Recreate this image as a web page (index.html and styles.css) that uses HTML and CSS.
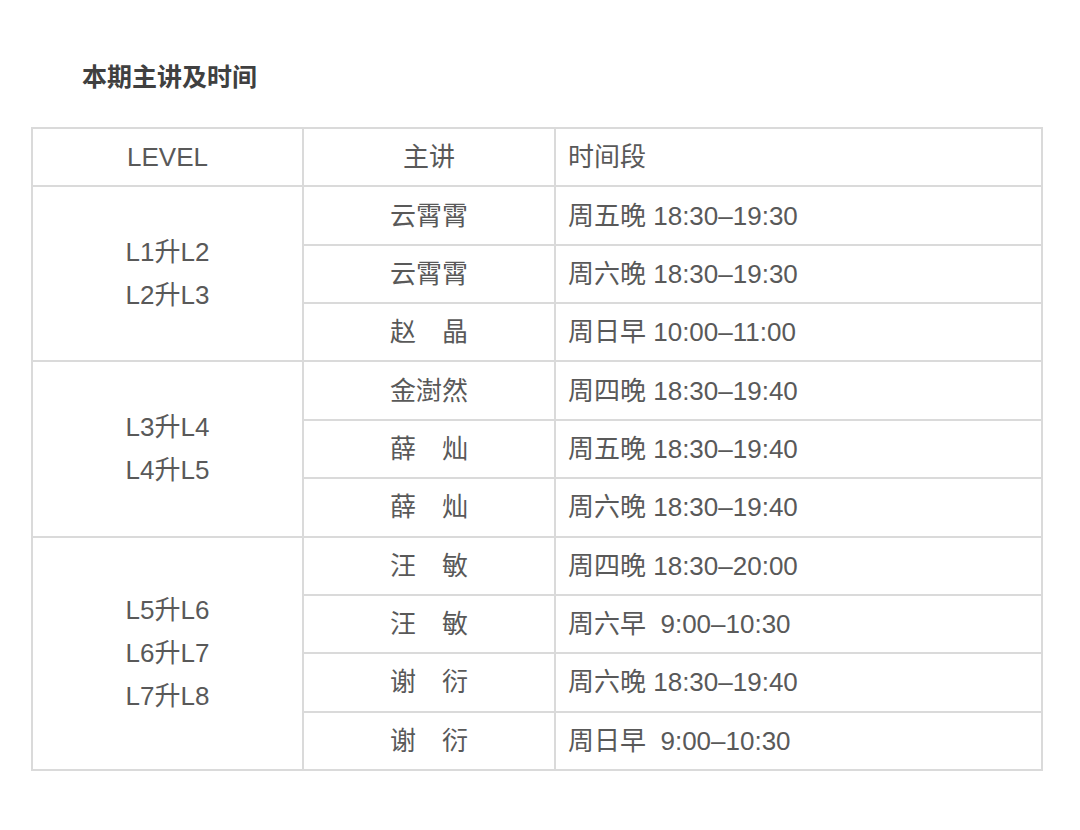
FILE: index.html
```html
<!DOCTYPE html>
<html lang="zh-CN">
<head>
<meta charset="utf-8">
<title>本期主讲及时间</title>
<link rel="stylesheet" href="styles.css">
</head>
<body>
<div class="page">
  <h2 class="title">本期主讲及时间</h2>
  <table class="schedule">
    <colgroup>
      <col class="c-level">
      <col class="c-teacher">
      <col class="c-time">
    </colgroup>
    <thead>
      <tr><th class="center">LEVEL</th><th class="center">主讲</th><th class="left">时间段</th></tr>
    </thead>
    <tbody>
      <tr><td class="center level" rowspan="3">L1升L2<br>L2升L3</td><td class="center">云霄霄</td><td>周五晚 18:30–19:30</td></tr>
      <tr><td class="center">云霄霄</td><td>周六晚 18:30–19:30</td></tr>
      <tr><td class="center">赵　晶</td><td>周日早 10:00–11:00</td></tr>
      <tr><td class="center level" rowspan="3">L3升L4<br>L4升L5</td><td class="center">金澍然</td><td>周四晚 18:30–19:40</td></tr>
      <tr><td class="center">薛　灿</td><td>周五晚 18:30–19:40</td></tr>
      <tr><td class="center">薛　灿</td><td>周六晚 18:30–19:40</td></tr>
      <tr><td class="center level" rowspan="4">L5升L6<br>L6升L7<br>L7升L8</td><td class="center">汪　敏</td><td>周四晚 18:30–20:00</td></tr>
      <tr><td class="center">汪　敏</td><td>周六早&nbsp; 9:00–10:30</td></tr>
      <tr><td class="center">谢　衍</td><td>周六晚 18:30–19:40</td></tr>
      <tr><td class="center">谢　衍</td><td>周日早&nbsp; 9:00–10:30</td></tr>
    </tbody>
  </table>
</div>
</body>
</html>
```
FILE: styles.css
```css
html, body {
  margin: 0;
  padding: 0;
  background: #ffffff;
}
body {
  font-family: "Liberation Sans", "Noto Sans CJK SC", sans-serif;
  color: #555555;
}
.page {
  padding: 60px 0 0 31px;
}
.title {
  margin: 0 0 33px 51px;
  font-size: 25px;
  line-height: 34px;
  font-weight: bold;
  color: #404040;
}
.schedule {
  border-collapse: collapse;
  table-layout: fixed;
  width: 1010px;
  font-size: 26px;
  color: #595959;
}
.c-level { width: 271px; }
.c-teacher { width: 252px; }
.c-time { width: 487px; }
.schedule th,
.schedule td {
  border: 2px solid #dadada;
  height: 56.36px;
  padding: 0 12px;
  font-weight: normal;
  line-height: 30px;
  text-align: left;
  vertical-align: middle;
}
.schedule .center {
  text-align: center;
}
.schedule td.level {
  line-height: 43px;
}
```
